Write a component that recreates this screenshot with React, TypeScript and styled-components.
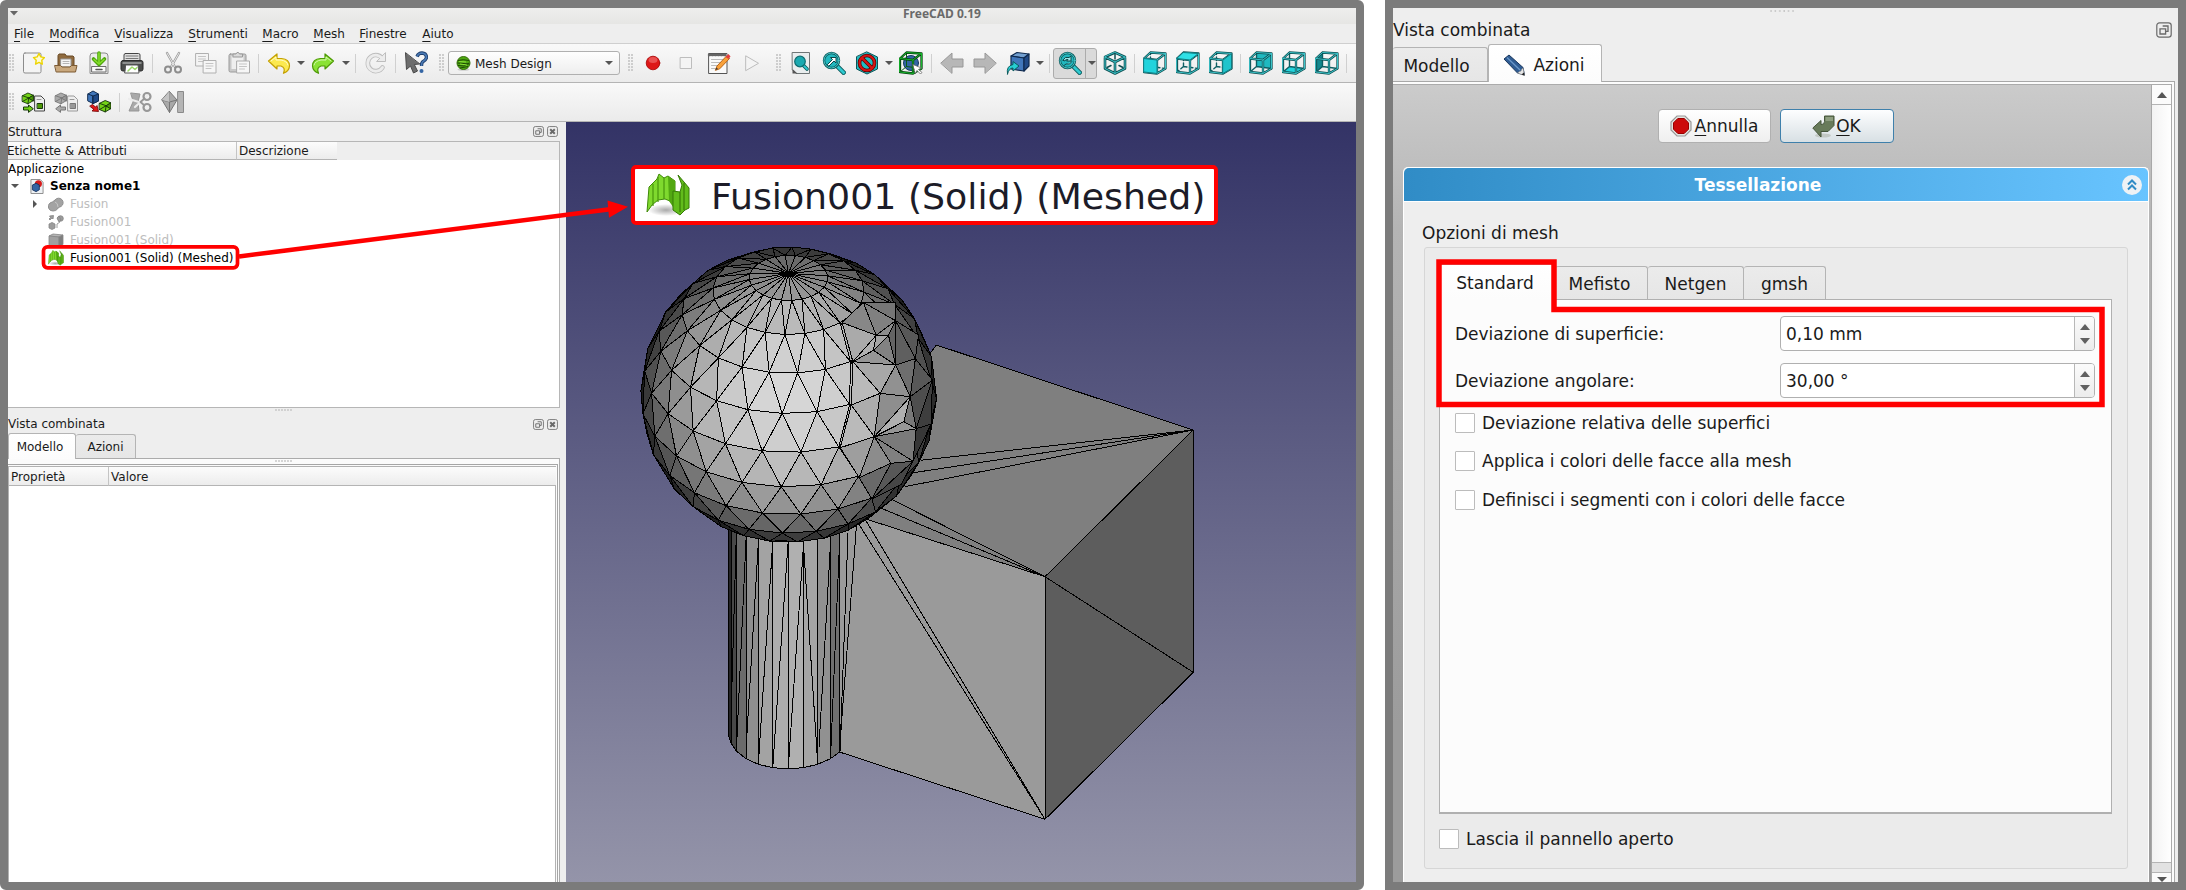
import React from 'react';
import styled, { createGlobalStyle, css } from 'styled-components';

const Global = createGlobalStyle`
  * { box-sizing: border-box; }
  body { margin: 0; background: #fff; }
  #root { font-family: "DejaVu Sans", sans-serif; color: #1a1a1a; }
  svg { display: block; flex: none; }
`;

/* ---------- page frame ---------- */

const Page = styled.main`
  position: relative;
  display: flex;
  gap: 21px;
  width: 2186px;
  height: 890px;
  overflow: hidden;
  white-space: nowrap;
`;

const Window = styled.section<{ $width: number; $radius?: number }>`
  display: flex;
  flex-direction: column;
  flex: none;
  width: ${p => p.$width}px;
  height: 890px;
  border: 8px solid #7b7b7b;
  border-radius: ${p => p.$radius ?? 0}px;
  background: #eeeeee;
  overflow: hidden;
`;

const TitleBar = styled.header`
  display: flex;
  align-items: flex-start;
  height: 16px;
  background: linear-gradient(#eeeeed, #e6e6e4);
  color: #6a6a6a;
  font: bold 12px/12px "Noto Sans", sans-serif;
`;

const WindowMenu = styled.span`
  width: 895px;
  padding: 3px 0 0 2px;
`;

const MenuBar = styled.nav`
  display: flex;
  height: 20px;
  padding-left: 6px;
  border-bottom: 1px solid #cfcfcf;
  font-size: 12px;
  line-height: 20px;
`;

const MenuItem = styled.span<{ $width: number }>`
  width: ${p => p.$width}px;
`;

const Mnemonic = styled.span`
  text-decoration: underline;
  text-underline-offset: 3px;
  text-decoration-thickness: 1px;
  text-decoration-skip-ink: none;
`;

/* ---------- toolbars ---------- */

const ToolBar = styled.div`
  display: flex;
  align-items: center;
  height: 39px;
  border-bottom: 1px solid #b4b4b4;
  background: linear-gradient(#f9f9f9, #ebebeb);
`;

const Tool = styled.span<{ $width?: number }>`
  display: flex;
  justify-content: center;
  flex: none;
  width: ${p => p.$width ?? 33}px;
`;

const Space = styled.span<{ $width: number }>`
  flex: none;
  width: ${p => p.$width}px;
`;

const Separator = styled.span<{ $width?: number }>`
  flex: none;
  width: ${p => p.$width ?? 7}px;
  height: 19px;
  background: linear-gradient(#d0d0d0, #d0d0d0) center / 1px 100% no-repeat;
`;

const Grip = styled.span`
  flex: none;
  width: 6px;
  height: 18px;
  margin: 0 1px;
  background: radial-gradient(circle at 1px 1px, #cdcdcd 0.8px, transparent 1px) 0 0 / 3px 3px;
`;

const Caret = styled.span<{ $width?: number }>`
  display: flex;
  justify-content: center;
  flex: none;
  width: ${p => p.$width ?? 11}px;
  &::after {
    content: '';
    border: 4px solid transparent;
    border-top-color: #555;
    border-bottom: 0;
  }
`;

const PressedGroup = styled.span`
  display: flex;
  align-items: center;
  width: 44px;
  height: 31px;
  border: 1px solid #acacac;
  border-radius: 3px;
  background: #dadada;
`;

const PressedMenu = styled.span`
  display: flex;
  align-items: center;
  width: 12px;
  height: 29px;
  border-left: 1px solid #acacac;
`;

const Combo = styled.div`
  display: flex;
  align-items: center;
  gap: 4px;
  width: 172px;
  height: 24px;
  padding: 0 5px 0 7px;
  border: 1px solid #b0b0b0;
  border-radius: 3px;
  background: linear-gradient(#fefefe, #eeeeee);
  font-size: 12px;
`;

const ComboLabel = styled.span`
  flex: 1;
  padding-top: 1px;
`;

/* ---------- left docks ---------- */

const Workspace = styled.div`
  display: flex;
  flex: 1;
  min-height: 0;
`;

const DockColumn = styled.aside`
  display: flex;
  flex-direction: column;
  width: 558px;
  padding-right: 6px;
  font-size: 12px;
`;

const DockTitle = styled.div<{ $height: number }>`
  display: flex;
  align-items: center;
  gap: 3px;
  height: ${p => p.$height}px;
  padding-right: 2px;
`;

const DockName = styled.span`flex: 1;`;

const TreeFrame = styled.div`
  display: flex;
  flex-direction: column;
  height: 267px;
  border: 1px solid #b6b6b6;
  border-left: 0;
  background: #fff;
`;

const HeaderRow = styled.div<{ $height: number }>`
  display: flex;
  height: ${p => p.$height}px;
  background: #eeeeee;
  line-height: ${p => p.$height + 1}px;
`;

const HeaderCell = styled.span<{ $width: number; $pad?: number; $shift?: number }>`
  flex: none;
  width: ${p => p.$width}px;
  padding-left: ${p => p.$pad ?? 2}px;
  text-indent: ${p => p.$shift ?? 0}px;
  border-bottom: 1px solid #b4b4b4;
  background: linear-gradient(#fcfcfc, #ececec);
  & + & { border-left: 1px solid #c4c4c4; }
`;

const TreeRow = styled.div<{ $indent?: number; $height?: number; $muted?: boolean; $bold?: boolean }>`
  display: flex;
  align-items: center;
  height: ${p => p.$height ?? 18}px;
  padding-left: ${p => p.$indent ?? 0}px;
  color: ${p => (p.$muted ? '#bdbdbd' : '#000')};
  font-weight: ${p => (p.$bold ? 700 : 400)};
  gap: 6px;
`;

const Branch = styled.span<{ $open?: boolean }>`
  width: 8px;
  display: flex;
  justify-content: center;
  margin-right: ${p => (p.$open ? 5 : 3)}px;
  &::after {
    content: '';
    border: 4px solid transparent;
    ${p => p.$open
      ? css`border-top-color: #555; border-bottom: 0;`
      : css`border-left-color: #555; border-right: 0;`}
  }
`;

const Splitter = styled.div<{ $height: number; $left: number; $wide?: boolean }>`
  flex: none;
  height: ${p => p.$height}px;
  padding-left: ${p => p.$left}px;
  &::after {
    content: '';
    display: block;
    width: ${p => (p.$wide ? 26 : 18)}px;
    height: ${p => (p.$wide ? 4 : 3)}px;
    background: radial-gradient(circle at 1px ${p => (p.$wide ? '3px' : '2px')}, #c8c8c8 0.6px, transparent 1px) 0 0 / ${p => (p.$wide ? '4.4px' : '3px')} 100%;
  }
`;

const TabRow = styled.div<{ $height: number; $left?: number }>`
  display: flex;
  align-items: flex-end;
  flex: none;
  height: ${p => p.$height}px;
  padding-left: ${p => p.$left ?? 0}px;
`;

const Tab = styled.span<{ $width: number; $height: number; $active?: boolean; $inset?: number; $drop?: number }>`
  display: flex;
  align-items: center;
  justify-content: center;
  gap: 7px;
  width: ${p => p.$width}px;
  height: ${p => p.$height}px;
  padding-right: ${p => p.$inset ?? 0}px;
  padding-top: ${p => p.$drop ?? 0}px;
  border: 1px solid #b4b4b4;
  border-left-width: ${p => (p.$active ? 1 : 0)}px;
  border-bottom: 0;
  border-radius: 3px 3px 0 0;
  background: ${p => (p.$active ? 'linear-gradient(#ffffff, #fcfcfc)' : 'linear-gradient(#ebebeb, #e6e6e6)')};
  margin-bottom: ${p => (p.$active ? -1 : 0)}px;
  z-index: ${p => (p.$active ? 1 : 0)};
`;

const PanelTab = styled(Tab)`
  padding-top: 3px;
  font-size: 17px;
`;

const PropertyPane = styled.div`
  display: flex;
  flex-direction: column;
  flex: 1;
  border: 1px solid #ababab;
  border-width: 1px 1px 0 0;
  background: #fbfbfb;
  padding-right: 1px;
`;

const PropertyFrame = styled.div`
  flex: 1;
  border: 1px solid #a6a6a6;
  border-width: 1px 1px 0 0;
  padding: 1px 1px 0 0;
`;

const PropertyTable = styled.div`
  height: 100%;
  border: 1px solid #b2b2b2;
  border-bottom: 0;
  background: #fff;
`;

/* ---------- task panel ---------- */

const PanelTitle = styled.div`
  display: flex;
  align-items: center;
  height: 20px;
  padding-right: 6px;
  font-size: 17px;
`;

const TaskFrame = styled.div`
  display: flex;
  flex: 1;
  min-height: 0;
  width: 782px;
  border: 1px solid #a8a8a8;
  border-width: 1px 1px 0 0;
  background: #fcfcfc;
  padding: 2px 2px 0 0;
`;

const TaskInner = styled.div`
  display: flex;
  flex: 1;
  border: 1px solid #ababab;
  border-width: 1px 1px 0 0;
`;

const TaskArea = styled.div`
  display: flex;
  flex-direction: column;
  width: 758px;
  padding-left: 10px;
  background: linear-gradient(#cbcbcb, #b4b4b4 18%, #9c9c9c 80%);
`;

const ButtonRow = styled.div`
  display: flex;
  gap: 9px;
  height: 82px;
  padding: 24px 0 0 255px;
`;

const PushButton = styled.button<{ $primary?: boolean }>`
  display: flex;
  align-items: center;
  justify-content: center;
  gap: ${p => (p.$primary ? 1 : 3)}px;
  width: ${p => (p.$primary ? 114 : 113)}px;
  height: 34px;
  padding: 0 1px 0 0;
  border: ${p => (p.$primary ? '1.5px solid #3f80ab' : '1px solid #b0b0b0')};
  border-radius: 4px;
  background: ${p => (p.$primary ? 'linear-gradient(#fdfeff, #d8e0e4)' : 'linear-gradient(#ffffff, #efefef)')};
  color: #1a1a1a;
  font: 17px "DejaVu Sans", sans-serif;
`;

const TaskBox = styled.div`
  display: flex;
  flex-direction: column;
  flex: 1;
  width: 746px;
  border: 1px solid #fff;
  border-bottom: 0;
  border-radius: 5px 5px 0 0;
  background: #eeeeee;
  font-size: 17px;
`;

const TaskHeader = styled.div`
  display: flex;
  align-items: center;
  height: 34px;
  padding-right: 6px;
  border-bottom: 1px solid #fff;
  border-radius: 5px 5px 0 0;
  background: linear-gradient(90deg, #308cc6, #68c4ff);
  color: #fff;
  font-weight: 700;
`;

const TaskName = styled.span`
  flex: 1;
  padding-right: 10px;
  text-align: center;
`;

const GroupTitle = styled.div`
  height: 45px;
  padding: 20px 0 0 18px;
  line-height: 22px;
`;

const Group = styled.div`
  display: flex;
  flex-direction: column;
  width: 704px;
  height: 622px;
  margin-left: 20px;
  border: 1px solid #d6d6d6;
  border-radius: 3px;
  background: #ebebeb;
`;

const TabPane = styled.div`
  display: flex;
  flex-direction: column;
  flex: none;
  width: 673px;
  height: 515px;
  margin-left: 14px;
  padding: 16px 15px 0 15px;
  border: 1px solid #b0b0b0;
  border-bottom-width: 2px;
  background: #fcfcfc;
`;

const Field = styled.label`
  display: flex;
  align-items: center;
  height: 35px;
  margin-bottom: 12px;
`;

const FieldName = styled.span`width: 325px;`;

const SpinBox = styled.span`
  display: flex;
  align-items: center;
  width: 315px;
  height: 35px;
  border: 1px solid #b0b0b0;
  border-radius: 4px;
  background: #fff;
`;

const SpinValue = styled.span`
  flex: 1;
  padding-left: 5px;
`;

const SpinArrows = styled.span`
  display: flex;
  flex-direction: column;
  align-items: center;
  justify-content: center;
  gap: 8px;
  width: 20px;
  height: 100%;
  border-left: 1px solid #b8b8b8;
  border-radius: 0 3px 3px 0;
  background: linear-gradient(#fbfbfb, #ececec);
  &::before, &::after { content: ''; border: 5px solid transparent; }
  &::before { border-bottom: 6px solid #606060; border-top: 0; }
  &::after { border-top: 6px solid #606060; border-bottom: 0; }
`;

const CheckList = styled.div`
  display: flex;
  flex-direction: column;
  gap: 18.5px;
  padding-top: 2.5px;
`;

const CheckRow = styled.label`
  display: flex;
  align-items: center;
  gap: 7px;
  height: 20px;
`;

const FooterCheck = styled(CheckRow)`
  margin: 15px 0 0 14px;
`;

const CheckBox = styled.span`
  width: 20px;
  height: 20px;
  border: 1px solid #bcbcbc;
  border-radius: 1px;
  background: #fff;
`;

const ScrollBar = styled.div`
  display: flex;
  flex-direction: column;
  flex: 1;
  border-left: 1px solid #a8a8a8;
  background: linear-gradient(90deg, #f3f3f3, #fff);
`;

const ScrollButton = styled.span<{ $down?: boolean }>`
  display: flex;
  justify-content: center;
  align-items: center;
  height: ${p => (p.$down ? 10 : 20)}px;
  border: 0 solid #b4b4b4;
  border-width: ${p => (p.$down ? '1px 0 0' : '0 0 1px')};
  background: #fbfbfb;
  &::after {
    content: '';
    border: 5px solid transparent;
    ${p => p.$down
      ? css`border-top: 5px solid #555; border-bottom: 0; margin-top: 3px;`
      : css`border-bottom: 6px solid #555; border-top: 0;`}
  }
`;

const ScrollTrack = styled.span`flex: 1;`;
const ScrollThumbEnd = styled.span`
  height: 10px;
  border-top: 1px solid #b4b4b4;
  background: #e2e2e2;
`;

/* ---------- annotations ---------- */

const Overlay = styled.svg`
  position: absolute;
  left: 0;
  top: 0;
  z-index: 2;
  pointer-events: none;
`;

const Callout = styled.div`
  position: absolute;
  left: 631px;
  top: 165px;
  z-index: 3;
  display: flex;
  align-items: center;
  gap: 21px;
  width: 587px;
  height: 60px;
  padding-left: 11px;
  border: 4px solid #ff0000;
  border-radius: 5px;
  background: #fff;
  color: #1c1c28;
  font-size: 36.3px;
`;

const CalloutText = styled.span`padding-top: 2px;`;

/* ---------- icons ---------- */

const Icon = ({ size = 24, children }: { size?: number; children: React.ReactNode }) => (
  <svg width={size} height={size} viewBox="0 0 24 24" strokeLinejoin="round" strokeLinecap="round">{children}</svg>
);

const NewIcon = () => (
  <Icon>
    <rect x="2.5" y="2" width="17.5" height="20" rx="1.5" fill="#f4f4f4" stroke="#8c8c8c" />
    <path d="M18 2.5l1.8 3.4 3.7.7-2.7 2.7.5 3.8-3.3-1.7-3.4 1.7.6-3.8-2.7-2.7 3.7-.7z" fill="#fffbd0" stroke="#edd400" strokeWidth="1.4" />
  </Icon>
);
const OpenIcon = () => (
  <Icon>
    <path d="M4 14V4.5l1-1.5h6l1.5 2H19l1 1v8z" fill="#8f6b3f" stroke="#6b4b26" />
    <path d="M7 8h10v8H7z" fill="#f5f5f5" stroke="#999" />
    <path d="M9 10.500h6M9 12.500h6" stroke="#b5b5b5" />
    <path d="M1 14.500h5.500l1.500 1.500h8l1.500-1.500H23L21.500 21h-19z" fill="#c9a87d" stroke="#7c5a33" />
  </Icon>
);
const SaveIcon = () => (
  <Icon>
    <path d="M3 22V5q0-3 3-3h12q3 0 3 3v17z" fill="#ececec" stroke="#8a8a8a" />
    <rect x="5" y="15.500" width="14" height="5.500" fill="#fafafa" stroke="#6c6c6c" />
    <path d="M9 18.500h6" stroke="#555" strokeWidth="1.500" />
    <path d="M12 2v9M6.500 8l5.500 5.500L17.500 8" fill="none" stroke="#4ea60c" strokeWidth="3.600" />
    <path d="M12 2v9M7 8.500l5 4.500 5-4.500" fill="none" stroke="#86e02c" strokeWidth="1.500" />
  </Icon>
);
const PrintIcon = () => (
  <Icon>
    <rect x="4" y="2.500" width="16" height="10" rx="1.500" fill="#e0e0e0" stroke="#444" />
    <path d="M6 5h12M6 7.500h12" stroke="#777" />
    <rect x="1" y="9.500" width="22" height="10.500" rx="2" fill="#4b4d4c" stroke="#2b2b2b" />
    <rect x="2.500" y="11" width="19" height="2" fill="#8d8f8e" />
    <path d="M6 14h12l1 8H5z" fill="#fff" stroke="#555" />
    <path d="M8 20l4-4 3 2.500 2-2" stroke="#9bd86a" fill="none" strokeWidth="1.500" />
  </Icon>
);
const CutIcon = () => (
  <Icon>
    <path d="M6 2l8 14M18 2l-8 14" stroke="#9a9a9a" strokeWidth="2.400" />
    <path d="M6 2l8 14M18 2l-8 14" stroke="#e9e9e9" strokeWidth="1" />
    <circle cx="7" cy="18.500" r="3" fill="none" stroke="#8d8d8d" strokeWidth="2" />
    <circle cx="17" cy="18.500" r="3" fill="none" stroke="#8d8d8d" strokeWidth="2" />
  </Icon>
);
const CopyIcon = () => (
  <Icon>
    <rect x="2" y="2.500" width="12.500" height="12.500" fill="#f4f4f4" stroke="#b0b0b0" />
    <path d="M4.500 5.500h7M4.500 8h7M4.500 10.500h5" stroke="#c4c4c4" />
    <rect x="9.500" y="9.500" width="12.500" height="12.500" fill="#f6f6f6" stroke="#b0b0b0" />
    <path d="M12 12.500h7M12 15h7M12 17.500h5" stroke="#c4c4c4" />
  </Icon>
);
const PasteIcon = () => (
  <Icon>
    <rect x="2" y="3" width="17" height="18" rx="1.500" fill="#c9c9c9" stroke="#9a9a9a" />
    <rect x="4.500" y="5" width="12" height="13" fill="#efefef" />
    <path d="M6 5V3h3l1-1.500h1.500L12.500 3h3v3H6z" fill="#dadada" stroke="#999" />
    <rect x="10" y="10" width="12.500" height="12" fill="#f6f6f6" stroke="#ababab" />
    <path d="M12.500 13h7M12.500 15.500h7M12.500 18h5" stroke="#c4c4c4" />
  </Icon>
);
const UNDO = 'M1.500 10L10 3v4.500h4.500q8 .5 8 7.500-.3 5-6 7.300 2.400-5.600-2.500-7.300H10v3z';
const UndoIcon = () => <Icon><path d={UNDO} fill="#fce94f" stroke="#c4a000" strokeWidth="1.200" /><path d="M4 10l5-4v3h5q6 1 7 5" fill="none" stroke="#fffbc9" /></Icon>;
const RedoIcon = () => <Icon><g transform="matrix(-1 0 0 1 24 0)"><path d={UNDO} fill="#8ae234" stroke="#4e9a06" strokeWidth="1.200" /><path d="M4 10l5-4v3h5q6 1 7 5" fill="none" stroke="#d4f8b0" /></g></Icon>;
const RefreshIcon = () => (
  <Icon>
    <path d="M18.500 16.500a8 8 0 1 1 .5-8" fill="none" stroke="#bdbdbd" strokeWidth="4.600" />
    <path d="M21.500 2v8.500H13z" fill="#ececec" stroke="#bdbdbd" />
    <path d="M18.500 16.500a8 8 0 1 1 .3-8" fill="none" stroke="#ececec" strokeWidth="2.800" />
  </Icon>
);
const WhatsThisIcon = () => (
  <Icon>
    <path d="M1.500 2l1 16.500 4-3.500 3 7 4-2-3.200-6.500 5.200-.5z" fill="#6d6d6d" stroke="#4a4a4a" />
    <path d="M13 5.500q1.500-3.500 5-3.500 4.500.5 4.500 4.500-.5 2.500-4 4.500-1 1-1 4" fill="none" stroke="#1f3f6d" strokeWidth="3.400" strokeLinecap="butt" />
    <path d="M13 5.500q1.500-3.500 5-3.500 4.500.5 4.500 4.500-.5 2.500-4 4.500-1 1-1 4" fill="none" stroke="#4a7ab5" strokeWidth="1.600" strokeLinecap="butt" />
    <circle cx="17.500" cy="20" r="2" fill="#3465a4" />
  </Icon>
);
const MeshBallIcon = () => (
  <svg width="15" height="15" viewBox="0 0 15 15">
    <ellipse cx="7.500" cy="13.500" rx="6" ry="1.300" fill="#ccc" />
    <circle cx="7.500" cy="7" r="6.500" fill="#4fa812" stroke="#356f0a" />
    <path d="M2 4.500q5-1.500 11 0M1.500 7l12 1M2 9.500l6 .5 5-3M4 12l8-1.500" stroke="#1d4a03" fill="none" />
    <path d="M3 5.500l7 .5M4 8l7 1" stroke="#8ae234" />
  </svg>
);
const RecordIcon = () => (
  <Icon>
    <circle cx="12" cy="12" r="6.800" fill="#dd1717" stroke="#a40000" strokeWidth=".8" />
    <ellipse cx="12" cy="9" rx="4.500" ry="3" fill="#f06a6a" opacity=".7" />
  </Icon>
);
const StopIcon = () => <Icon><rect x="6.500" y="6.500" width="11" height="11" fill="#f4f4f4" stroke="#bdbdbd" /></Icon>;
const PlayIcon = () => <Icon><path d="M6 5l12.500 7.300L6 19.500z" fill="#f4f4f4" stroke="#bdbdbd" /></Icon>;
const MacroEditIcon = () => (
  <Icon>
    <rect x="2" y="2.500" width="18" height="20" fill="#fafafa" stroke="#555" />
    <path d="M2 4h18" stroke="#666" strokeWidth="2.500" strokeDasharray="1 2" />
    <path d="M4.500 8.500h13M4.500 11.500h12M4.500 14.500h6M4.500 17.500h4" stroke="#bbb" />
    <path d="M8.500 19l1.500-4L19.500 5l3 2.500L13 17.500z" fill="#f9a13a" stroke="#b9671a" />
    <path d="M18.500 6l3-3 2 2.500-2 2.500z" fill="#e33d3d" />
    <path d="M8.500 19l1-2.500 1.500 1.500z" fill="#333" />
  </Icon>
);
const Lens = ({ children }: { children?: React.ReactNode }) => (
  <>
    <path d="M14.500 14.500l7 7" stroke="#0b5a5c" strokeWidth="4.600" strokeLinecap="square" />
    <path d="M14.500 14.500l7 7" stroke="#2fc9cf" strokeWidth="2.800" strokeLinecap="square" />
    <circle cx="9.500" cy="9.500" r="7.500" fill="#22b8bf" stroke="#0b5a5c" strokeWidth="2.400" />
    <circle cx="9.500" cy="9.500" r="7.500" fill="none" stroke="#5bdde0" strokeWidth=".8" />
    {children}
  </>
);
const FitAllIcon = () => (
  <Icon>
    <path d="M3.500 1.500h17v21H7l-3.500-3.500z" fill="#e9edee" stroke="#6e7576" />
    <path d="M3.500 18l5 4.500h-5z" fill="#555" />
    <path d="M14 14l4 4" stroke="#0b5a5c" strokeWidth="3.600" />
    <path d="M14 14l4 4" stroke="#2fc9cf" strokeWidth="1.800" />
    <circle cx="11" cy="10.500" r="5.300" fill="#1aa9b0" stroke="#0d6c70" strokeWidth="1.200" />
  </Icon>
);
const FitSelectionIcon = () => <Icon><Lens><path d="M5.500 13.500l5-5-2-2H14v5.500l-2-2-5 5z" fill="#fff" stroke="#0b4547" /></Lens></Icon>;
const ViewLensIcon = () => <Icon><Lens><path d="M5 9q2-4 6-2.500l2-1.500v5H8.500l1.500-1.500q-2-.5-3 1zM14 10.500q-2 4-6 2.500l-2 1.500" fill="#9be8ea" stroke="#0b4547" /></Lens></Icon>;
const DrawStyleIcon = () => (
  <Icon>
    <path d="M12 1l10.500 5v12L12 23 1.500 18V6z" fill="#1fbcc2" stroke="#0b5558" />
    <circle cx="12" cy="12" r="7.500" fill="none" stroke="#5a0000" strokeWidth="3.600" />
    <path d="M7 7l10 10" stroke="#5a0000" strokeWidth="3.600" />
    <circle cx="12" cy="12" r="7.500" fill="none" stroke="#d61414" strokeWidth="2.200" />
    <path d="M7 7l10 10" stroke="#d61414" strokeWidth="2.200" />
  </Icon>
);

const FRONT = ['1,7.5', '14,9', '14,22.5', '1,21'];
const BACK = ['7.5,1.500', '22.5,2.5', '22.5,17.500', '7.5,15.500'];
const FACES: Record<string, string> = {
  front: FRONT.join(' '),
  rear: BACK.join(' '),
  top: [FRONT[0], FRONT[1], BACK[1], BACK[0]].join(' '),
  bottom: [FRONT[3], FRONT[2], BACK[2], BACK[3]].join(' '),
  right: [FRONT[1], BACK[1], BACK[2], FRONT[2]].join(' '),
  left: [FRONT[0], BACK[0], BACK[3], FRONT[3]].join(' '),
};
const FACE_FILL: Record<string, string> = {
  front: '#22d3dc', top: '#2ee0e6', right: '#1fc4cc', rear: '#1fb9c0', bottom: '#22d3dc', left: '#12888e',
};
const CubeEdges = ({ dark = '#0d4f52', light = '#3cc4c9' }: { dark?: string; light?: string }) => {
  const solid = `M${FRONT.join('L')}ZM${FRONT[0]}L${BACK[0]}L${BACK[1]}L${FRONT[1]}M${BACK[1]}L${BACK[2]}L${FRONT[2]}`;
  return <g fill="none"><path d={solid} stroke={dark} strokeWidth="2.300" /><path d={solid} stroke={light} strokeWidth="1" /></g>;
};
const ViewCube = ({ face }: { face: string }) => {
  const behind = face === 'rear' || face === 'bottom' || face === 'left';
  return (
    <Icon>
      {behind && <polygon points={FACES[face]} fill={FACE_FILL[face]} />}
      <path d={`M${BACK[3]}L${BACK[0]}M${BACK[3]}L${BACK[2]}M${BACK[3]}L${FRONT[3]}`} stroke="#0d5f63" strokeWidth="1.400" strokeDasharray={behind ? undefined : '3.500 2.500'} />
      <CubeEdges />
      {!behind && <polygon points={FACES[face]} fill={FACE_FILL[face]} stroke="#0f7b80" strokeWidth="1" />}
    </Icon>
  );
};
const AxoIcon = () => (
  <Icon>
    {[['#0d4f52', 2.6], ['#3cc4c9', 1]].map(([c, w]) => (
      <path key={c} d="M12 1.500L22 6v11.500L12 22.500 2 17.500V6zM2 6l10 5 10-5M12 11v11.500" fill="none" stroke={c as string} strokeWidth={w} />
    ))}
    <path d="M12 3v5M4 16.500l4-2M20 16.500l-4-2" stroke="#0d4f52" strokeWidth="1.500" />
  </Icon>
);
const BoxSelectIcon = () => (
  <Icon>
    <circle cx="12" cy="12" r="7.500" fill="#3465a4" stroke="#173a63" />
    <path d={`M${BACK[3]}L${BACK[0]}M${BACK[3]}L${BACK[2]}M${BACK[3]}L${FRONT[3]}`} stroke="#0a5c14" />
    <CubeEdges dark="#05420d" light="#16b52c" />
    <path d="M14 13.500l8.500 3.500-3 1.500 3.500 3-1.500 1.500-3.500-3.500-1.500 3z" fill="#fff" stroke="#666" strokeWidth=".8" />
  </Icon>
);
const ARROW = 'M1 12L12 2v6h11v8H12v6z';
const BackIcon = () => <Icon><path d={ARROW} fill="#b7b7b7" stroke="#979797" /></Icon>;
const ForwardIcon = () => <Icon><path d={ARROW} transform="matrix(-1 0 0 1 24 0)" fill="#b7b7b7" stroke="#979797" /></Icon>;
const LinkIcon = () => (
  <Icon>
    <g stroke="#0f2a4f" strokeWidth="1.200">
      <path d="M5 5l6-3.500L23 3l-5 4z" fill="#729fcf" />
      <path d="M5 5l13 2v13L5 18z" fill="#4177bb" />
      <path d="M18 7l5-4v12l-5 5z" fill="#204a87" />
    </g>
    <path d="M1.500 23q-1.500-8 5.500-9.500V10.500l6 4.500-6 5v-3q-4 0-5.500 6z" fill="#27cdd3" stroke="#0b5a5c" />
  </Icon>
);

const Poly = ({ c, x, y, s = 1 }: { c: [string, string, string]; x: number; y: number; s?: number }) => (
  <g transform={`translate(${x} ${y}) scale(${s})`} stroke={c[2]} strokeWidth="1">
    <path d="M0 3l6-3 6 2.500v6L6 12 0 9.500z" fill={c[0]} />
    <path d="M0 3l7 2.500L6 12M7 5.500l5-3M0 9.500l7-4 5 3" fill="none" />
    <path d="M7 5.500L12 2.500v6z" fill={c[1]} />
  </g>
);
const MeshFileIcon = ({ muted }: { muted?: boolean }) => {
  const c: [string, string, string] = muted ? ['#aaa', '#999', '#777'] : ['#73d216', '#4e9a06', '#17380a'];
  return (
    <Icon>
      <Poly c={c} x={1.5} y={3} s={0.9} />
      <path d="M14 6h6l3.500 3.500V21H14z" fill="#eee" stroke={muted ? '#999' : '#444'} />
      <path d="M16 9.500h4" stroke="#999" />
      <rect x="16.500" y="13.500" width="5" height="5" fill={c[1]} stroke={c[2]} />
      <path d={muted ? 'M2 18.500l4.500-3.500v2h5v3h-5v2z' : 'M12 18.500l-4.500-3.500v2h-5v3h5v2z'} fill={c[0]} stroke={c[2]} />
    </Icon>
  );
};
const MeshFromShapeIcon = () => (
  <Icon>
    <g stroke="#0f2a4f"><path d="M1 4l5-3 5.500 3v7L6 13.500 1 11z" fill="#4177bb" /><path d="M6 6l5.500-2v7L6 13.500z" fill="#204a87" /><path d="M1 4l5 2v7" fill="none" /></g>
    <Poly c={['#73d216', '#4e9a06', '#17380a']} x={12.5} y={10.5} s={0.95} />
    <path d="M3 16l2.500-1.500 3 2.500 1.500-1.500 1.500 6-6.500-.5 1.500-1.500z" fill="#e01b1b" stroke="#6d0000" strokeWidth=".8" />
  </Icon>
);
const TrimIcon = () => (
  <Icon>
    <path d="M3 3l9 1-2 8 1 9H1l4-9z" fill="#a9a9a9" stroke="#959595" />
    <path d="M1 9l13 4M21 4L7 17" stroke="#ececec" strokeWidth="2.200" />
    <circle cx="19" cy="6.500" r="3.500" fill="none" stroke="#989898" strokeWidth="2.200" />
    <circle cx="19" cy="17.500" r="3.500" fill="none" stroke="#989898" strokeWidth="2.200" />
    <path d="M16.500 8.500l-4 3.500 4 3.500" fill="none" stroke="#989898" strokeWidth="1.800" />
  </Icon>
);
const CrossSectionIcon = () => (
  <Icon>
    <path d="M8.500 1.500L16 10 8.500 22.500 1 10z" fill="#a9a9a9" stroke="#777" />
    <path d="M1 10l7.500 2L16 10M8.500 1.500v21" stroke="#777" fill="none" />
    <path d="M8.500 1.500L1 10l7.500 2z" fill="#c4c4c4" />
    <rect x="17" y="1.500" width="5.500" height="21" fill="#b5b5b5" stroke="#8a8a8a" />
  </Icon>
);

const DockButton = ({ size, close }: { size: number; close?: boolean }) => (
  <svg width={size} height={size} viewBox="0 0 12 12" fill="none" stroke="#6a6a6a">
    <rect x=".6" y=".6" width="10.800" height="10.800" rx="2" strokeWidth=".9" />
    {close
      ? <path d="M3.500 3.500l5 5M8.500 3.500l-5 5" strokeWidth="2.200" />
      : <path d="M5 3h4v4h-1.500M3 5.200h4.200V9H3z" strokeWidth="1" />}
  </svg>
);

const DocIcon = () => (
  <svg width="14" height="17" viewBox="0 0 15 17">
    <path d="M1 1h10l3 3v12H1z" fill="#eef1f4" stroke="#8a8a8a" />
    <circle cx="9" cy="5.500" r="3.800" fill="#d61a1a" />
    <path d="M2.500 7l4-2 3.500 2v5l-3.500 2-4-2z" fill="#3465a4" stroke="#14305a" strokeWidth=".9" />
  </svg>
);
const FusionIcon = () => (
  <svg width="16" height="15" viewBox="0 0 16 15">
    <path d="M5 14a4.500 4.500 0 0 1-3-8Q5 5 7 3a4.500 4.500 0 1 1 6 6.500Q10 10 9.500 12 8 14 5 14z" fill="#a3a3a3" stroke="#8f8f8f" />
    <path d="M7 5q3 1 3 5" stroke="#c6c6c6" fill="none" />
  </svg>
);
const ExplodeIcon = () => (
  <svg width="16" height="16" viewBox="0 0 16 16" fill="#9c9c9c" stroke="#858585" strokeWidth=".8">
    <circle cx="12.500" cy="4.500" r="2.800" /><path d="M9 4l2-2 2 4-2 2z" />
    <path d="M1 10l3-1.500L7 10v4l-3 1.500L1 14z" /><path d="M1.500 2l4-.5L5 5l-1-1-2 2-1-1 1.500-1.500zM9 10l3-2M9 10v4" />
  </svg>
);
const SolidIcon = () => (
  <svg width="16" height="15" viewBox="0 0 16 15" stroke="#858585" strokeWidth=".8">
    <path d="M1 3l4-2 10 1-4 2z" fill="#b5b5b5" /><path d="M1 3l10 1v10L1 12.500z" fill="#a0a0a0" /><path d="M11 4l4-2v9.500L11 14z" fill="#7e7e7e" />
  </svg>
);
const MeshIcon = ({ size }: { size: number }) => (
  <svg width={size} height={size} viewBox="0 0 44 44">
    <defs><radialGradient id="soft"><stop offset="0" stopColor="#aaa" /><stop offset="1" stopColor="#aaa" stopOpacity="0" /></radialGradient></defs>
    <ellipse cx="20" cy="37" rx="18" ry="6" fill="url(#soft)" />
    <path d="M1 39L3 14l8-8 2-5 5 4 4-2 7 5v26l-5-6-5-2-7 1-6 5z" fill="#7fd92e" stroke="#3f8a08" strokeWidth="1" />
    <path d="M7 11v22M12 4v25M18 5v21" stroke="#4c9a10" strokeWidth="1.300" />
    <path d="M22 3l7 5v29l-2-3-4-6z" fill="#52a812" />
    <path d="M27 18l7 1 2-7-4-10 6 7 5 6v20l-4 2-5 5-7-5z" fill="#62bc1c" stroke="#357a06" strokeWidth="1" />
    <path d="M34 19v20M38 10v27" stroke="#3b8008" strokeWidth="1.300" />
  </svg>
);

const PencilIcon = () => (
  <svg width="23" height="23" viewBox="0 0 23 23" strokeLinejoin="round">
    <path d="M1 5l5-4 14 12.500 1.500 7.500-7-2z" fill="#2f5c93" stroke="#19365c" />
    <path d="M4 3.500l13 12.500" stroke="#6b97c9" strokeWidth="1.300" />
    <path d="M20 14l1.500 7.500-7-2.500 2-1.500 1.500-.5 .5-1.500z" fill="#e6e6e6" stroke="#888" strokeWidth=".6" />
    <path d="M21.500 21.500l-.6-3-2.400 2z" fill="#222" />
  </svg>
);
const CancelIcon = () => (
  <svg width="22" height="22" viewBox="0 0 22 22">
    <path d="M7 1h8l6 6v8l-6 6H7l-6-6V7z" fill="#e4e4e0" stroke="#999" strokeWidth="1.200" />
    <path d="M7.800 3.500h6.400l4.300 4.300v6.400l-4.300 4.300H7.800l-4.300-4.300V7.800z" fill="#cc0a0a" stroke="#9a0000" />
  </svg>
);
const OkIcon = () => (
  <svg width="23" height="23" viewBox="0 0 23 23">
    <ellipse cx="11" cy="20.500" rx="8" ry="2" fill="#c2c8c4" />
    <path d="M12.500 1h9.500v9.500l-6 6H9v5.500L.8 13 9 5.500v4q3.500.5 3.500-3z" fill="#687b5a" stroke="#45553b" />
    <path d="M13.500 2h7.500v4h-7.500z" fill="#8d9e80" />
  </svg>
);
const CollapseIcon = () => (
  <svg width="20" height="20" viewBox="0 0 20 20">
    <circle cx="10" cy="10" r="10" fill="#eef2f5" />
    <path d="M6 9.500L10 5.500l4 4M6 14.500l4-4 4 4" fill="none" stroke="#308cc6" strokeWidth="2" />
  </svg>
);

/* ---------- 3D scene ---------- */

type Vec = [number, number, number];
type Pt = [number, number];

const RADIUS = 148;
const CENTER: Pt = [788.5, 394.7];
const ELEVATION = (37 * Math.PI) / 180;

const onSphere = (lat: number, lon: number): Vec => {
  const a = (lat * Math.PI) / 180;
  const b = (lon * Math.PI) / 180;
  const x = Math.cos(a) * Math.sin(b);
  const d = Math.cos(a) * Math.cos(b);
  const h = Math.sin(a);
  return [
    x,
    d * Math.sin(ELEVATION) - h * Math.cos(ELEVATION),
    h * Math.sin(ELEVATION) + d * Math.cos(ELEVATION),
  ];
};

const project = ([x, y, z]: Vec): Pt => {
  const k = RADIUS / (1 - 0.042 * z);
  return [CENTER[0] + x * k, CENTER[1] + y * k];
};

const grey = (v: number) => {
  const n = Math.max(20, Math.min(255, Math.round(v)));
  return `rgb(${n},${n},${n})`;
};

const sphereFacets = () => {
  const rings = [75, 60, 45, 30, 15, 0, -15, -30, -45, -60];
  const out: { points: string; fill: string }[] = [];
  const push = (tri: Vec[]) => {
    const [a, b, c] = tri;
    const u = [b[0] - a[0], b[1] - a[1], b[2] - a[2]];
    const v = [c[0] - a[0], c[1] - a[1], c[2] - a[2]];
    const n = [u[1] * v[2] - u[2] * v[1], u[2] * v[0] - u[0] * v[2], u[0] * v[1] - u[1] * v[0]];
    const len = Math.hypot(n[0], n[1], n[2]);
    const sign = n[0] * a[0] + n[1] * a[1] + n[2] * a[2] < 0 ? -1 : 1;
    const nz = (n[2] / len) * sign;
    if (nz <= 0.02) return;
    out.push({ points: tri.map(t => project(t).map(q => q.toFixed(1)).join(',')).join(' '), fill: grey(215 * nz) });
  };
  const lon = (ring: number, i: number) => -2.7 + i * 15 + (ring % 2 === 0 ? 7.5 : 0);
  for (let i = 0; i < 24; i++) {
    push([onSphere(90, 0), onSphere(75, lon(0, i)), onSphere(75, lon(0, i + 1))]);
    for (let r = 0; r < rings.length - 1; r++) {
      const shift = r % 2 === 0 ? 1 : 0;
      const u0 = onSphere(rings[r], lon(r, i));
      const u1 = onSphere(rings[r], lon(r, i + 1));
      const l0 = onSphere(rings[r + 1], lon(r + 1, i + shift));
      const l1 = onSphere(rings[r + 1], lon(r + 1, i + shift - 1));
      push([u0, u1, l0]);
      push([u0, l1, l0]);
    }
  }
  return out;
};

const CYL_X = [728.3, 731, 736.3, 746, 758.4, 772.6, 788, 803.5, 817.7, 830.4, 839.5];
const CYL_Y = [735, 743, 751, 758.7, 764.3, 767.7, 768.7, 767.7, 764.3, 758.7, 752];
const CYL_FILL = [36, 72, 107, 143, 163, 173, 176, 165, 145, 111];

/* facets where the box cuts into the ball */
const P: Record<string, Pt> = {
  a: [895.6, 302.3], b: [895.6, 320.7], c: [876.2, 335.3], d: [888.5, 335.3], e: [873.5, 350.3],
  f: [852.9, 361.7], g: [895.6, 365], h: [915.4, 358.7], i: [918.5, 335], j: [932.4, 380],
  k: [910.2, 396.7], l: [880.2, 393.3], m: [903.9, 421.7], n: [916.2, 428.7], o: [874.3, 436.7],
  q: [913, 461.3], r: [859.2, 477.7], s: [871.9, 499], t: [901.5, 484.3], u: [842.2, 322.7],
  x: [863.2, 302.3], y: [931.2, 424], z: [890.9, 463.3], A: [851.3, 405], B: [840.2, 447.7],
};
const CUTS: [string, number][] = [
  ['uxc', 135], ['xbc', 128], ['xab', 118], ['ucf', 170], ['cdb', 140], ['bdg', 100], ['cde', 165], ['cef', 176],
  ['deg', 130], ['efg', 150], ['bih', 88], ['bhg', 95], ['flg', 168], ['flA', 186], ['gkl', 145], ['ghk', 110],
  ['hjk', 88], ['lko', 142], ['lAo', 172], ['kmo', 176], ['kmn', 120], ['mno', 150], ['kjn', 78],
  ['jyn', 62], ['onq', 122], ['ozq', 128], ['ozr', 140], ['oBr', 158], ['AoB', 186], ['rzs', 105], ['zqs', 88], ['qts', 70], ['nyq', 55],
];

const Scene = () => (
  <svg width="790" height="760" viewBox="566 122 790 760">
    <defs>
      <linearGradient id="sky" x1="0" y1="0" x2="0" y2="1">
        <stop offset="0" stopColor="#333366" />
        <stop offset="1" stopColor="#9494a9" />
      </linearGradient>
    </defs>
    <rect x="566" y="122" width="790" height="760" fill="url(#sky)" />
    <g stroke="#000" strokeWidth="1" strokeLinejoin="round" shapeRendering="crispEdges">
      <path d="M936.300 345L1193.300 430L1045 576.700L866 519L850 450L930.400 353Z" fill="#7f7f7f" />
      <path d="M1193.300 430V672.300L1045 819.300V576.700Z" fill="#5d5d5d" />
      <path d="M839.500 752L1045 819.300V576.700L866 519L838 520Z" fill="#9a9a9a" />
      <path
        fill="none"
        d="M1045 576.700L1193.300 672.300M1193.300 430L920.500 460.300M1193.300 430L913.400 472.700M1193.300 430L904.700 486.700M1045 576.700L892.800 500M1045 576.700L881.400 508.300M1045 819.300L858.400 523.500M1045 819.300L865.200 519.500"
      />
      {CYL_FILL.map((v, i) => (
        <path key={i} d={`M${CYL_X[i]} 500V${CYL_Y[i]}L${CYL_X[i + 1]} ${CYL_Y[i + 1]}V500Z`} fill={grey(v)} />
      ))}
      <path
        fill="none"
        d="M736.500 748L746 540M746 750L758.400 542M758.600 760L772.600 544M773 764L788 544M789 757L803.500 545M817.700 763L803.500 545M819 747L830.400 545M831 747L839.500 543M840 752L848 533M841 730L856.500 525M731.500 700L736.300 535"
      />
      {sphereFacets().map((f, i) => <polygon key={i} points={f.points} fill={f.fill} />)}
      {CUTS.map(([k, v]) => (
        <polygon key={k} points={k.split('').map(c => P[c].join(',')).join(' ')} fill={grey(v)} />
      ))}
      <path d="M781 274.300h15M783 273h11M784 275.500h9" strokeWidth="2" />
    </g>
  </svg>
);

/* ---------- application ---------- */

const MENUS: [string, number][] = [
  ['File', 35.3], ['Modifica', 65], ['Visualizza', 74], ['Strumenti', 74], ['Macro', 51], ['Mesh', 46], ['Finestre', 63], ['Aiuto', 50],
];

const Menu = ({ text }: { text: string }) => <><Mnemonic>{text[0]}</Mnemonic>{text.slice(1)}</>;

const MainWindow = () => (
  <Window $width={1364} $radius={6}>
    <TitleBar>
      <WindowMenu><svg width="8" height="5"><path d="M0 0h8L4 4.500z" fill="#666" /></svg></WindowMenu>
      <span>FreeCAD 0.19</span>
    </TitleBar>
    <MenuBar>
      {MENUS.map(([m, w]) => <MenuItem key={m} $width={w}><Menu text={m} /></MenuItem>)}
    </MenuBar>
    <ToolBar>
      <Grip />
      <Tool><NewIcon /></Tool><Tool><OpenIcon /></Tool><Tool><SaveIcon /></Tool><Tool><PrintIcon /></Tool>
      <Separator $width={8} />
      <Tool><CutIcon /></Tool><Tool><CopyIcon /></Tool><Tool><PasteIcon /></Tool>
      <Separator />
      <Tool><UndoIcon /></Tool><Caret /><Tool><RedoIcon /></Tool><Caret $width={13} />
      <Separator />
      <Tool><RefreshIcon /></Tool>
      <Separator />
      <Tool><WhatsThisIcon /></Tool>
      <Space $width={6} /><Grip /><Space $width={2} />
      <Combo><MeshBallIcon /><ComboLabel>Mesh Design</ComboLabel><Caret /></Combo>
      <Space $width={7} /><Grip /><Space $width={1} />
      <Tool><RecordIcon /></Tool><Tool><StopIcon /></Tool><Tool><MacroEditIcon /></Tool><Tool><PlayIcon /></Tool>
      <Space $width={7} /><Grip /><Space $width={1} />
      <Tool><FitAllIcon /></Tool><Tool><FitSelectionIcon /></Tool><Tool><DrawStyleIcon /></Tool><Caret />
      <Tool $width={34}><BoxSelectIcon /></Tool>
      <Separator />
      <Tool><BackIcon /></Tool><Tool><ForwardIcon /></Tool><Tool><LinkIcon /></Tool><Caret />
      <Separator $width={8} />
      <PressedGroup><Tool $width={31}><ViewLensIcon /></Tool><PressedMenu><Caret /></PressedMenu></PressedGroup>
      <Space $width={1} />
      <Tool><AxoIcon /></Tool>
      <Separator />
      {['front', 'top', 'right'].map(f => <Tool key={f}><ViewCube face={f} /></Tool>)}
      <Separator />
      {['rear', 'bottom', 'left'].map(f => <Tool key={f}><ViewCube face={f} /></Tool>)}
      <Separator />
    </ToolBar>
    <ToolBar>
      <Grip />
      <Tool><MeshFileIcon /></Tool><Tool><MeshFileIcon muted /></Tool><Tool><MeshFromShapeIcon /></Tool>
      <Separator $width={8} />
      <Tool><TrimIcon /></Tool><Tool><CrossSectionIcon /></Tool>
    </ToolBar>
    <Workspace>
      <DockColumn>
        <DockTitle $height={19}>
          <DockName>Struttura</DockName><DockButton size={11} /><DockButton size={11} close />
        </DockTitle>
        <TreeFrame>
          <HeaderRow $height={18}>
            <HeaderCell $width={228} $pad={0} $shift={-1}>Etichette &amp; Attributi</HeaderCell>
            <HeaderCell $width={101}>Descrizione</HeaderCell>
          </HeaderRow>
          <TreeRow $height={17}>Applicazione</TreeRow>
          <TreeRow $indent={3} $bold><Branch $open /><DocIcon />Senza nome1</TreeRow>
          <TreeRow $indent={23} $muted><Branch /><FusionIcon />Fusion</TreeRow>
          <TreeRow $indent={40} $muted><ExplodeIcon />Fusion001</TreeRow>
          <TreeRow $indent={40} $muted><SolidIcon />Fusion001 (Solid)</TreeRow>
          <TreeRow $indent={40}><MeshIcon size={16} />Fusion001 (Solid) (Meshed)</TreeRow>
        </TreeFrame>
        <Splitter $height={7} $left={267} />
        <DockTitle $height={18}>
          <DockName>Vista combinata</DockName><DockButton size={11} /><DockButton size={11} close />
        </DockTitle>
        <TabRow $height={25}>
          <Tab $width={68} $height={26} $active $inset={4}>Modello</Tab>
          <Tab $width={60} $height={24}>Azioni</Tab>
        </TabRow>
        <PropertyPane>
          <Splitter $height={5} $left={267} />
          <PropertyFrame>
            <PropertyTable>
              <HeaderRow $height={19}>
                <HeaderCell $width={99}>Proprietà</HeaderCell>
                <HeaderCell $width={448} $pad={2}>Valore</HeaderCell>
              </HeaderRow>
            </PropertyTable>
          </PropertyFrame>
        </PropertyPane>
      </DockColumn>
      <Scene />
    </Workspace>
  </Window>
);

const TaskPanel = () => (
  <Window $width={801}>
    <Splitter $height={12} $left={377} $wide />
    <PanelTitle><DockName>Vista combinata</DockName><DockButton size={16} /></PanelTitle>
    <TabRow $height={41}>
      <PanelTab $width={95} $height={34} $inset={7}>Modello</PanelTab>
      <PanelTab $width={114} $height={38} $active $inset={2}><PencilIcon />Azioni</PanelTab>
    </TabRow>
    <TaskFrame>
      <TaskInner>
        <TaskArea>
          <ButtonRow>
            <PushButton><CancelIcon /><span><Menu text="Annulla" /></span></PushButton>
            <PushButton $primary><OkIcon /><span><Menu text="OK" /></span></PushButton>
          </ButtonRow>
          <TaskBox>
            <TaskHeader><TaskName>Tessellazione</TaskName><CollapseIcon /></TaskHeader>
            <GroupTitle>Opzioni di mesh</GroupTitle>
            <Group>
              <TabRow $height={51} $left={14}>
                <Tab $width={116} $height={36} $active $inset={4} $drop={1}>Standard</Tab>
                <Tab $width={93} $height={33} $inset={3} $drop={2}>Mefisto</Tab>
                <Tab $width={96} $height={33} $drop={2}>Netgen</Tab>
                <Tab $width={82} $height={33} $drop={2}>gmsh</Tab>
              </TabRow>
              <TabPane>
                <Field><FieldName>Deviazione di superficie:</FieldName><SpinBox><SpinValue>0,10 mm</SpinValue><SpinArrows /></SpinBox></Field>
                <Field><FieldName>Deviazione angolare:</FieldName><SpinBox><SpinValue>30,00 °</SpinValue><SpinArrows /></SpinBox></Field>
                <CheckList>
                  <CheckRow><CheckBox />Deviazione relativa delle superfici</CheckRow>
                  <CheckRow><CheckBox />Applica i colori delle facce alla mesh</CheckRow>
                  <CheckRow><CheckBox />Definisci i segmenti con i colori delle facce</CheckRow>
                </CheckList>
              </TabPane>
              <FooterCheck><CheckBox />Lascia il pannello aperto</FooterCheck>
            </Group>
          </TaskBox>
        </TaskArea>
        <ScrollBar>
          <ScrollButton />
          <ScrollTrack />
          <ScrollThumbEnd />
          <ScrollButton $down />
        </ScrollBar>
      </TaskInner>
    </TaskFrame>
  </Window>
);

export default function App() {
  return (
    <>
      <Global />
      <Page>
        <MainWindow />
        <TaskPanel />
        <Overlay width="2186" height="890" fill="none" stroke="#ff0000">
          <rect x="43.500" y="246.800" width="194" height="21" rx="4" strokeWidth="3.700" />
          <path d="M239 256.500L610 209.300" strokeWidth="4.500" />
          <path d="M628 206.800L607.500 200.500L609 217.700Z" fill="#ff0000" stroke="none" />
          <path d="M1439 262H1554V309.500H2102V404.500H1439Z" strokeWidth="5.500" />
        </Overlay>
        <Callout><MeshIcon size={44} /><CalloutText>Fusion001 (Solid) (Meshed)</CalloutText></Callout>
      </Page>
    </>
  );
}
